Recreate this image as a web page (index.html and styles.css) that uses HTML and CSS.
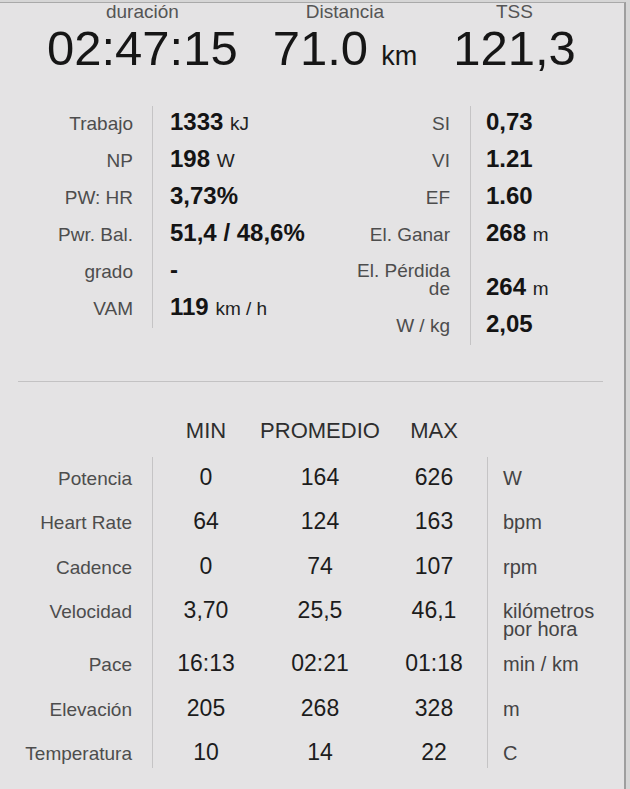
FILE: index.html
```html
<!DOCTYPE html>
<html lang="es">
<head>
<meta charset="utf-8">
<title>Resumen de actividad</title>
<link rel="stylesheet" href="styles.css">
</head>
<body>
<main class="panel">
  <header class="summary">
    <div class="metric">
      <div class="metric-label">duración</div>
      <div class="metric-value">02:47:15</div>
    </div>
    <div class="metric metric-dist">
      <div class="metric-label">Distancia</div>
      <div class="metric-value">71.0<span class="metric-unit">km</span></div>
    </div>
    <div class="metric metric-tss">
      <div class="metric-label">TSS</div>
      <div class="metric-value">121,3</div>
    </div>
  </header>

  <section class="stats">
    <div class="stat-grid stat-left">
      <div class="vr"></div>
      <div class="k">Trabajo</div><div class="v">1333 <span class="u">kJ</span></div>
      <div class="k">NP</div><div class="v">198 <span class="u">W</span></div>
      <div class="k">PW: HR</div><div class="v">3,73%</div>
      <div class="k">Pwr. Bal.</div><div class="v">51,4 / 48,6%</div>
      <div class="k">grado</div><div class="v">-</div>
      <div class="k">VAM</div><div class="v">119 <span class="u">km / h</span></div>
    </div>
    <div class="stat-grid stat-right">
      <div class="vr"></div>
      <div class="k">SI</div><div class="v">0,73</div>
      <div class="k">VI</div><div class="v">1.21</div>
      <div class="k">EF</div><div class="v">1.60</div>
      <div class="k">El. Ganar</div><div class="v">268 <span class="u">m</span></div>
      <div class="k k-multi">El. Pérdida<br>de</div><div class="v">264 <span class="u">m</span></div>
      <div class="k">W / kg</div><div class="v">2,05</div>
    </div>
  </section>

  <hr class="rule">

  <section class="ranges">
    <div class="vr vr-a"></div>
    <div class="vr vr-b"></div>

    <div class="h h-min">MIN</div><div class="h">PROMEDIO</div><div class="h">MAX</div>

    <div class="rl">Potencia</div><div class="n n-first">0</div><div class="n">164</div><div class="n">626</div><div class="un">W</div>
    <div class="rl">Heart Rate</div><div class="n n-first">64</div><div class="n">124</div><div class="n">163</div><div class="un">bpm</div>
    <div class="rl">Cadence</div><div class="n n-first">0</div><div class="n">74</div><div class="n">107</div><div class="un">rpm</div>
    <div class="rl">Velocidad</div><div class="n n-first">3,70</div><div class="n">25,5</div><div class="n">46,1</div><div class="un un-multi">kilómetros<br>por hora</div>
    <div class="rl">Pace</div><div class="n n-first">16:13</div><div class="n">02:21</div><div class="n">01:18</div><div class="un">min / km</div>
    <div class="rl">Elevación</div><div class="n n-first">205</div><div class="n">268</div><div class="n">328</div><div class="un">m</div>
    <div class="rl">Temperatura</div><div class="n n-first">10</div><div class="n">14</div><div class="n">22</div><div class="un">C</div>
  </section>
</main>
</body>
</html>
```

FILE: styles.css
```css
* {
  box-sizing: border-box;
}

html, body {
  margin: 0;
  padding: 0;
}

body {
  background: #d6d6d6;
  padding-top: 2px;
  font-family: "Liberation Sans", Arial, Helvetica, sans-serif;
  color: #1a1a1a;
  height: 789px;
  overflow: hidden;
}

.panel {
  width: 626px;
  height: 787px;
  background: #e4e3e4;
  border-top: 1px solid #a9a9a9;
  border-right: 2px solid #9e9e9e;
}

/* ---------- summary header ---------- */
.summary {
  display: flex;
  padding: 1px 0 0 47px;
}

.metric {
  display: flex;
  flex-direction: column;
  align-items: center;
}

.metric-dist {
  margin-left: 35px;
}

.metric-tss {
  margin-left: 36px;
}

.metric-label {
  font-size: 19px;
  line-height: 16px;
  color: #555;
}

.metric-value {
  margin-top: 4px;
  font-size: 49px;
  line-height: 49px;
  color: #161616;
  white-space: nowrap;
}

.metric-unit {
  font-size: 27px;
  margin-left: 13px;
}

/* ---------- top stats ---------- */
.stats {
  display: flex;
  align-items: flex-start;
  margin-top: 25px;
}

.stat-grid {
  display: grid;
  align-items: last baseline;
}

.stat-left {
  width: 320px;
  grid-template-columns: 152px 1px 1fr;
  grid-template-rows: repeat(6, 37px);
}

.stat-right {
  grid-template-columns: 150px 1px 1fr;
  grid-template-rows: repeat(4, 37px) 54px 37px;
}

.vr {
  grid-column: 2;
  grid-row: 1 / -1;
  align-self: stretch;
  background: #c5c4c5;
}

.k {
  grid-column: 1;
  text-align: right;
  font-size: 19px;
  line-height: 17px;
  padding: 9px 19px 11px 0;
  color: #4d4d4d;
}

.k-multi {
  line-height: 18px;
  padding-top: 8px;
  padding-bottom: 10px;
}

.stat-right .k {
  padding-right: 20px;
}

.v {
  grid-column: 3;
  font-size: 24px;
  line-height: 17px;
  font-weight: bold;
  padding: 9px 0 11px 17px;
  color: #141414;
  white-space: nowrap;
}

.stat-right .v {
  padding-left: 15px;
}

.u {
  font-size: 19px;
  font-weight: normal;
  color: #222;
}

/* ---------- rule ---------- */
.rule {
  margin: 36px 21px 0 18px;
  border: 0;
  height: 1px;
  background: #c3c2c3;
}

/* ---------- min / avg / max table ---------- */
.ranges {
  display: grid;
  grid-template-columns: 152px 1px 106px 122px 106px 1px 1fr;
  grid-template-rows: 37px 44px 45px 44px 53px 45px 44px 45px;
  align-items: baseline;
  padding-top: 38px;
}

.ranges .vr {
  grid-row: 2 / -1;
  margin-bottom: 9px;
}

.ranges .vr-a {
  grid-column: 2;
}

.ranges .vr-b {
  grid-column: 6;
}

.h {
  font-size: 22px;
  line-height: 22px;
  text-align: center;
  color: #2e2e2e;
}

.h-min {
  grid-column: 3;
}

.rl {
  grid-column: 1;
  text-align: right;
  font-size: 19px;
  line-height: 22px;
  padding: 9px 20px 13px 0;
  color: #4d4d4d;
  white-space: nowrap;
}

.n {
  font-size: 23px;
  line-height: 22px;
  padding: 9px 0 13px;
  text-align: center;
  color: #1c1c1c;
}

.n-first {
  grid-column: 3;
}

.un {
  grid-column: 7;
  font-size: 20px;
  line-height: 22px;
  padding: 9px 0 13px 15px;
  color: #444;
  white-space: nowrap;
}

.un-multi {
  line-height: 18px;
}
```
